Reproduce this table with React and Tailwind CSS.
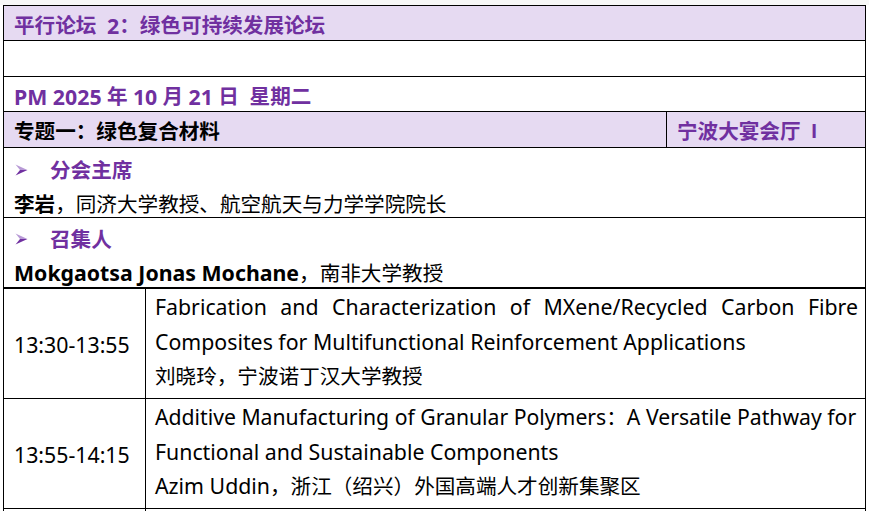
import React from "react";

const font = { fontFamily: '"Noto Sans", "Noto Sans CJK SC", sans-serif' };

function L({ children }) {
  return <span className="text-[21.3px]">{children}</span>;
}

function Arrow() {
  return (
    <svg width="13" height="12" viewBox="0 0 13 12" className="shrink-0">
      <path d="M0.5 0.5 L12.5 6 L5 6 Z" fill="#b89ad6" />
      <path d="M0.5 11.5 L12.5 6 L5 6 Z" fill="#7030A0" />
    </svg>
  );
}

export default function App() {
  return (
    <div className="bg-white w-[869px] h-[511px] overflow-hidden" style={font}>
      <div className="h-[5px] bg-[#f7f7f7]" />
      <div className="ml-[3px] w-[863px] border-t border-l border-r border-black text-[20.6px] text-black">
        <div className="h-[35px] bg-[#e6daf2] border-b border-black flex items-center pt-[5px] pl-[10px] font-bold text-[#7030a0]">
          平行论坛&nbsp;&nbsp;<L>2</L>：绿色可持续发展论坛
        </div>
        <div className="h-[36px] border-b border-black" />
        <div className="h-[35px] border-b border-black flex items-center pt-[5px] pl-[10px] font-bold text-[#7030a0]">
          <L>PM 2025</L>&nbsp;年&nbsp;<L>10</L>&nbsp;月&nbsp;<L>21</L>&nbsp;日&nbsp;&nbsp;星期二
        </div>
        <div className="h-[36px] bg-[#e6daf2] border-b border-black flex font-bold">
          <div className="w-[663px] border-r border-black flex items-center pt-[4px] pl-[10px]">专题一：绿色复合材料</div>
          <div className="flex-1 flex items-center pt-[4px] pl-[10px] text-[#7030a0]">
            宁波大宴会厅&nbsp;&nbsp;<span style={{ fontFamily: '"Liberation Sans", sans-serif' }}>I</span>
          </div>
        </div>
        <div className="h-[70px] border-b border-black pl-[10px] pt-[5px] leading-[34px]">
          <div className="flex items-center gap-[22px] font-bold text-[#7030a0] pl-[1px]">
            <Arrow />
            <span>分会主席</span>
          </div>
          <div>
            <span className="font-bold">李岩</span>，同济大学教授、航空航天与力学学院院长
          </div>
        </div>
        <div className="h-[71px] border-b-2 border-black pl-[10px] pt-[4px] leading-[34px]">
          <div className="flex items-center gap-[22px] font-bold text-[#7030a0] pl-[1px]">
            <Arrow />
            <span>召集人</span>
          </div>
          <div>
            <span className="font-bold"><L>Mokgaotsa Jonas Mochane</L></span>，南非大学教授
          </div>
        </div>
        <div className="h-[110px] border-b border-black flex">
          <div className="w-[142px] border-r border-black flex items-center pt-[3px] pl-[10px]"><L>13:30-13:55</L></div>
          <div className="flex-1 min-w-0 pl-[9px] pr-[7px] pt-[1px] leading-[34.5px]">
            <div className="text-justify [text-align-last:justify] whitespace-nowrap text-[21.3px]">
              Fabrication and Characterization of MXene/Recycled Carbon Fibre
            </div>
            <div className="whitespace-nowrap text-[21.3px]">
              Composites for Multifunctional Reinforcement Applications
            </div>
            <div>刘晓玲，宁波诺丁汉大学教授</div>
          </div>
        </div>
        <div className="h-[110px] border-b border-black flex">
          <div className="w-[142px] border-r border-black flex items-center pt-[3px] pl-[10px]"><L>13:55-14:15</L></div>
          <div className="flex-1 min-w-0 pl-[9px] pr-[7px] pt-[1px] leading-[34.5px]">
            <div className="whitespace-nowrap text-[21.2px]">
              Additive Manufacturing of Granular Polymers<span className="text-[20.6px]">：</span>A Versatile Pathway for
            </div>
            <div className="whitespace-nowrap text-[21.3px]">
              Functional and Sustainable Components
            </div>
            <div><L>Azim Uddin</L>，浙江（绍兴）外国高端人才创新集聚区</div>
          </div>
        </div>
        <div className="h-[10px] flex">
          <div className="w-[142px] border-r border-black" />
        </div>
      </div>
    </div>
  );
}
